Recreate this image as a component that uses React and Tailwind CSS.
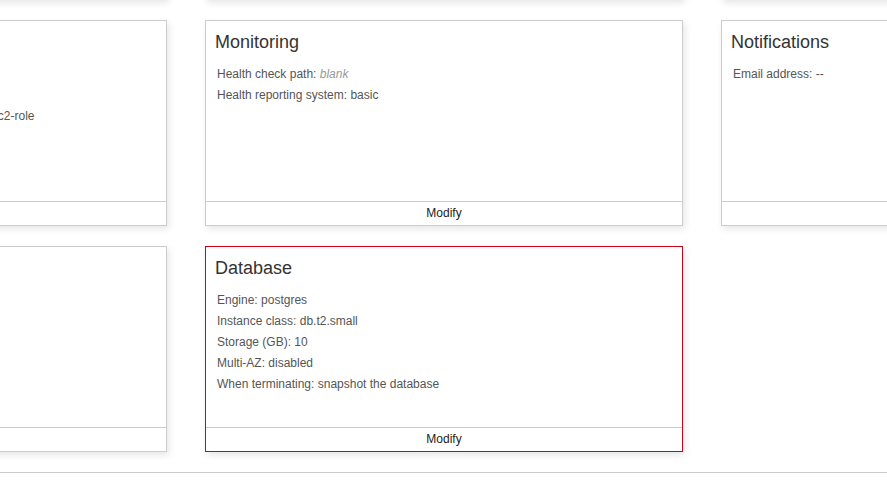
import React from "react";

const font = { fontFamily: '"Liberation Sans", Arial, Helvetica, sans-serif' };

function Card({ title, lines = [], red = false, footer = true }) {
  return (
    <div
      className={`w-[478px] h-[206px] shrink-0 flex flex-col bg-white border ${
        red ? "border-[#d0021b]" : "border-[#cccccc]"
      } shadow-[2px_3px_7px_rgba(0,0,0,0.10)]`}
    >
      <div className="flex-1 pl-[9px] pt-[11px]">
        {title && (
          <h3 className="text-[18px] leading-[20px] text-[#333333] mb-[12px]">{title}</h3>
        )}
        <ul className="pl-[2px] text-[12px] leading-[21px] text-[#555555]">
          {lines.map((l, i) => (
            <li key={i}>{l}</li>
          ))}
        </ul>
      </div>
      <div className="h-[24px] border-t border-[#cccccc] text-center text-[12px] leading-[23px] text-[#222222]">
        {footer ? "Modify" : ""}
      </div>
    </div>
  );
}

function Spacer() {
  return <div className="w-[478px] h-[206px] shrink-0" />;
}

export default function App() {
  return (
    <div className="w-full h-[487px] overflow-hidden bg-white" style={font}>
      <div className="-mt-[206px] flex flex-col gap-[20px]">
        <div className="ml-[-311px] flex flex-col gap-[20px]">
          <div className="flex gap-[38px]">
            <Card footer={false} />
            <Card footer={false} />
            <Card footer={false} />
          </div>
          <div className="flex gap-[38px]">
            <Card
              title="Security"
              lines={[
                "Service role: aws-elasticbeanstalk-service-role",
                "Virtual machine key pair: --",
                "IAM instance profile: myapp-env-aws-elasticbeanstalk-ec2-role",
              ]}
            />
            <Card
              title="Monitoring"
              lines={[
                <>
                  Health check path: <em className="text-[#999999]">blank</em>
                </>,
                "Health reporting system: basic",
              ]}
            />
            <Card title="Notifications" lines={["Email address: --"]} footer={false} />
          </div>
          <div className="flex gap-[38px]">
            <Card title="Network" lines={["This environment is not part of a VPC."]} footer={false} />
            <Card
              title="Database"
              red
              lines={[
                "Engine: postgres",
                "Instance class: db.t2.small",
                "Storage (GB): 10",
                "Multi-AZ: disabled",
                "When terminating: snapshot the database",
              ]}
            />
            <Spacer />
          </div>
        </div>
        <div className="h-px w-full bg-[#cccccc]" />
      </div>
    </div>
  );
}
